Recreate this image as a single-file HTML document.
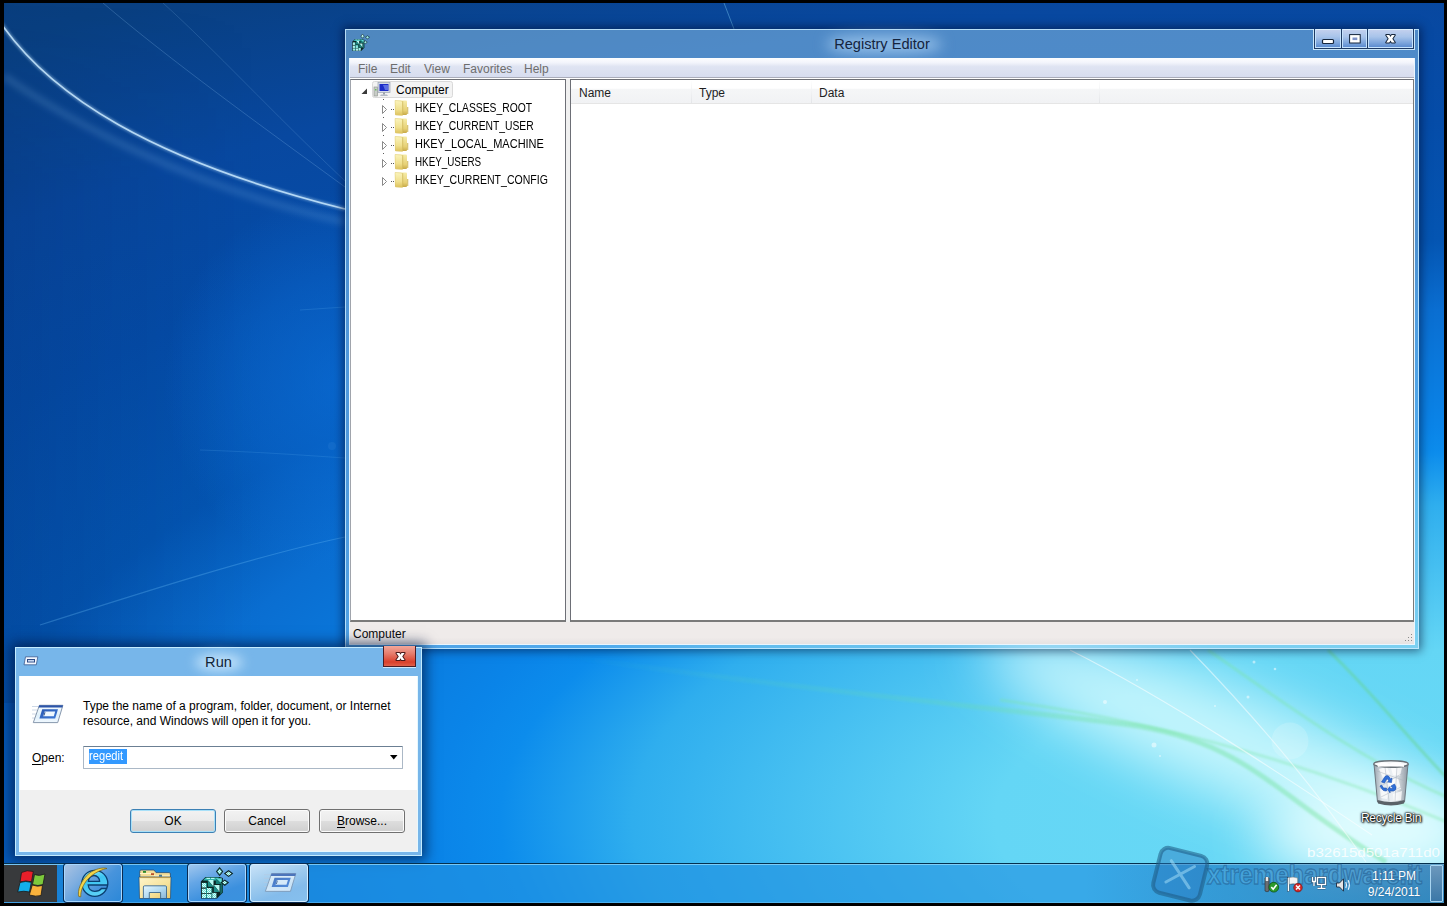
<!DOCTYPE html>
<html><head><meta charset="utf-8">
<style>
*{box-sizing:border-box;margin:0;padding:0}
html,body{width:1447px;height:906px;overflow:hidden;background:#000}
body{position:relative;font-family:"Liberation Sans",sans-serif;font-size:12px;color:#000}
.abs{position:absolute}
#wall{position:absolute;left:4px;top:3px;width:1440px;height:900px;overflow:hidden;
 background:radial-gradient(2500px 1000px at 1416px 817px,#6adaf6 0%,#64d6f5 17%,#2faeee 31.5%,#0c8cec 36.8%,#0a84e8 39.4%,#0a6ed1 51%,#0455b2 58%,#054ca8 70%,#0848a0 82%,#093f80 96.6%,#083a78 110%);}
.cb{position:absolute;top:0;height:19px;background:linear-gradient(#c2d0ee 0,#a8c4ea 40%,#7ea6dc 75%,#5c8cd0 100%);border:1px solid rgba(200,230,255,0.95);border-top-color:#dcf0ff}
.menu{top:5px;line-height:13px;font-size:12px;color:#6d6d6d}
.hk{left:65px;line-height:14px;font-size:12px;color:#000;transform:scaleX(0.86);transform-origin:0 0;white-space:nowrap}
.lh{top:28px;line-height:14px;font-size:12px;color:#1e1e1e}
.btn{width:86px;height:24px;border:1px solid #707070;border-radius:3px;background:linear-gradient(#f2f2f2 0,#ebebeb 48%,#dddddd 52%,#cfcfcf 100%);text-align:center;line-height:21px;padding-top:1px;font-size:12px;color:#000;box-shadow:inset 0 0 0 1px #fbfbfb}
.tbtn{top:1px;height:38px;border:1px solid #a8d8ff;border-radius:3px;box-shadow:0 0 0 1px #0a2a50}
.bord{position:absolute;background:#000}
</style></head>
<body>
<div id="wall">
 <div class="abs" style="left:0;top:0;width:260px;height:700px;background:linear-gradient(90deg,rgba(0,20,60,0.13) 0%,rgba(0,20,60,0.07) 40%,rgba(0,20,60,0) 100%);-webkit-mask-image:linear-gradient(rgba(0,0,0,0) 0,#000 180px)"></div>
 <div class="abs" style="left:160px;top:190px;width:360px;height:380px;background:radial-gradient(closest-side,rgba(12,118,228,0.55) 0%,rgba(12,118,228,0.3) 55%,rgba(12,118,228,0) 100%)"></div>
 <svg class="abs" style="left:0;top:0" width="1440" height="900" viewBox="4 3 1440 900">
  <defs>
   <filter id="bl3" x="-10%" y="-10%" width="120%" height="120%"><feGaussianBlur stdDeviation="3"/></filter>
   <filter id="bl1" x="-10%" y="-10%" width="120%" height="120%"><feGaussianBlur stdDeviation="1.2"/></filter>
   <filter id="bl25" x="-50%" y="-100%" width="200%" height="300%"><feGaussianBlur stdDeviation="28"/></filter>
   <filter id="bl8" x="-50%" y="-50%" width="200%" height="200%"><feGaussianBlur stdDeviation="12"/></filter>
  </defs>
  <!-- top-left curves -->
  <path d="M4 76 C 60 115, 180 185, 345 222" stroke="rgba(170,215,255,0.16)" stroke-width="7" fill="none" filter="url(#bl3)"/>
  <path d="M0 22 C 50 95, 150 160, 345 209" stroke="rgba(200,232,255,0.85)" stroke-width="1.6" fill="none"/>
  <path d="M0 22 C 50 95, 150 160, 345 209" stroke="rgba(200,235,255,0.35)" stroke-width="4" fill="none" filter="url(#bl1)"/>
  <path d="M103 3 C 170 60, 260 125, 345 187" stroke="rgba(160,210,250,0.22)" stroke-width="1" fill="none"/>
  <path d="M163 3 C 215 50, 270 110, 345 181" stroke="rgba(160,210,250,0.16)" stroke-width="1" fill="none"/>
  <path d="M40 625 C 150 590, 260 555, 345 537" stroke="rgba(120,200,255,0.28)" stroke-width="1.2" fill="none"/>
  <path d="M200 450 C 260 452, 300 455, 345 458" stroke="rgba(120,200,255,0.15)" stroke-width="1" fill="none"/>
  <path d="M300 310 L345 307" stroke="rgba(120,200,255,0.16)" stroke-width="1" fill="none"/>
  <circle cx="332" cy="446" r="4" fill="rgba(150,210,255,0.07)"/>
  <path d="M724 3 L734 29" stroke="rgba(120,200,240,0.45)" stroke-width="1" fill="none"/>
  <!-- bottom right glow -->
  <ellipse cx="1235" cy="745" rx="270" ry="52" transform="rotate(22 1235 745)" fill="rgba(225,255,255,0.75)" filter="url(#bl25)"/>
  <ellipse cx="1370" cy="835" rx="110" ry="45" fill="rgba(235,255,255,0.9)" filter="url(#bl25)"/>
  <!-- green streaks -->
  <linearGradient id="gs" gradientUnits="userSpaceOnUse" x1="564" y1="0" x2="1150" y2="0"><stop offset="0" stop-color="rgb(110,225,150)" stop-opacity="0"/><stop offset="0.6" stop-color="rgb(110,225,150)" stop-opacity="0.18"/><stop offset="1" stop-color="rgb(110,225,150)" stop-opacity="0.42"/></linearGradient>
  <path d="M564 656 C 800 690, 1000 708, 1123 724 S 1270 792, 1386 862" stroke="url(#gs)" stroke-width="5" fill="none" filter="url(#bl1)"/>
  <path d="M1000 700 C 1150 720, 1300 760, 1447 822" stroke="rgba(120,230,160,0.35)" stroke-width="3" fill="none" filter="url(#bl1)"/>
  <path d="M1208 650 C 1280 700, 1360 760, 1447 797" stroke="rgba(120,230,150,0.35)" stroke-width="3" fill="none" filter="url(#bl1)"/>
  <path d="M1328 650 C 1370 690, 1410 740, 1447 778" stroke="rgba(100,210,130,0.45)" stroke-width="3" fill="none" filter="url(#bl1)"/>
  <!-- white thin lines -->
  <path d="M1070 650 C 1170 700, 1290 780, 1372 835" stroke="rgba(255,255,255,0.55)" stroke-width="1.2" fill="none"/>
  <path d="M1190 650 C 1250 712, 1310 780, 1366 862" stroke="rgba(255,255,255,0.5)" stroke-width="1.2" fill="none"/>
  <circle cx="1290" cy="741" r="18.5" fill="rgba(255,255,255,0.16)"/>
  <g fill="rgba(255,255,255,0.5)">
   <circle cx="1105" cy="702" r="2"/><circle cx="1154" cy="745" r="2.5"/><circle cx="1254" cy="662" r="1.5"/><circle cx="1275" cy="669" r="1.3"/><circle cx="1248" cy="697" r="1.5"/><circle cx="1137" cy="680" r="1"/><circle cx="1215" cy="706" r="1"/><circle cx="1160" cy="756" r="1"/>
  </g>
 </svg>
 <!-- hash text -->
 <svg class="abs" style="left:1300px;top:840px" width="140" height="18"><text x="3" y="14" font-family="Liberation Sans" font-size="13" fill="rgba(255,255,255,0.85)" textLength="133" lengthAdjust="spacingAndGlyphs">b32615d501a711d0</text></svg>
</div>
<!-- recycle bin -->
<svg class="abs" style="left:1371px;top:759px" width="40" height="49" viewBox="0 0 40 49">
 <defs>
  <linearGradient id="rbg" x1="0" y1="0" x2="1" y2="0"><stop offset="0" stop-color="#9aa4ae"/><stop offset="0.25" stop-color="#dfe6ec"/><stop offset="0.6" stop-color="#eef2f5"/><stop offset="1" stop-color="#8e98a2"/></linearGradient>
 </defs>
 <path d="M3 5 L37 5 L33.5 43 Q 20 47 6.5 43 Z" fill="url(#rbg)" stroke="#6e7880" stroke-width="1"/>
 <g fill="#ffffff" opacity="0.75">
  <path d="M8 10 L16 8 L19 15 L12 19 Z"/><path d="M20 9 L31 8 L29 17 L22 16 Z"/><path d="M15 21 L27 19 L30 30 L20 33 Z"/><path d="M9 30 L18 32 L16 40 L10 39 Z"/><path d="M22 35 L31 32 L30 41 L23 42 Z"/>
 </g>
 <g fill="none" stroke="#a8b2bc" stroke-width="0.6" opacity="0.8"><path d="M6 12 L34 22 M8 28 L32 14 M10 38 L30 28 M14 8 L18 42 M26 6 L24 42"/></g>
 <ellipse cx="20" cy="5" rx="17.2" ry="3.3" fill="#f4f6f8" stroke="#6a7278" stroke-width="1.4"/>
 <path d="M6 5.5 Q 12 2 18 5 Q 25 2 33 5.5 L 33 8 Q 20 6 7 8 Z" fill="#ffffff" opacity="0.9"/>
 <path d="M6.5 41 Q 20 45 33.5 41 L 33 44.5 Q 20 48.5 7 44.5 Z" fill="#5a6268"/>
 <g fill="#2f6fd8" stroke="#1c50b0" stroke-width="0.6">
  <path d="M10.5 23 L14 17.5 Q 16 15.5 18 17.5 L 19.5 20 L 21 19 L 20.5 23.5 L 16.5 23 L 18 22 L 16 19.5 L 13.5 24 Z"/>
  <path d="M20 27 L 23.5 25 L 25 28 Q 25.5 31 22.5 32 L 19 32 L 19 33.8 L 16.5 30.5 L 19 27.5 L 19 29.5 L 22 29.5 Z"/>
  <path d="M9 27 L 11 30 Q 12 32 14.5 32 L 15.5 32 L 15.5 29 L 12.5 29 L 10.5 26 Z"/>
 </g>
</svg>
<div class="abs" style="left:1350px;top:811px;width:82px;text-align:center;font-size:12px;line-height:14px;color:#fff;text-shadow:0 0 1px #000,0 0 2px #000,0 0 3px #000,1px 1px 2px #000;letter-spacing:-0.3px">Recycle Bin</div>

<!-- Registry Editor window -->
<div id="reg" class="abs" style="left:345px;top:29px;width:1074px;height:620px;box-shadow:0 0 9px 2px rgba(0,10,40,0.55);">
 <div class="abs" style="left:0;top:0;width:1074px;height:620px;background:rgba(150,204,238,0.5);border:1px solid rgba(200,235,255,0.85);"></div>
 <!-- title glow -->
 <div class="abs" style="left:482px;top:7px;width:114px;height:17px;border-radius:40%;background:rgba(180,215,248,0.7);filter:blur(7px)"></div>
 <div class="abs" style="left:0;top:7px;width:1074px;text-align:center;font-size:14.6px;color:#14243e;line-height:16px">Registry Editor</div>
 <!-- reg icon -->
 <svg class="abs" style="left:4px;top:3px" width="22" height="22" viewBox="0 0 40 40"><use href="#regcube"/></svg>
 <!-- caption buttons -->
 <div class="abs" style="left:968px;top:0;width:102px;height:21px;border:1px solid rgba(215,240,255,0.9);border-top:none;"></div>
 <div class="abs" style="left:969px;top:0;width:100px;height:20px;background:#1e3a64;"></div>
 <div class="abs cb" style="left:970px;width:26px;"></div>
 <div class="abs cb" style="left:997px;width:25px;"></div>
 <div class="abs cb" style="left:1023px;width:45px;"></div>
 <svg class="abs" style="left:968px;top:0" width="102" height="21" viewBox="0 0 102 21">
  <rect x="9.5" y="10.5" width="11" height="4" rx="1" fill="#fff" stroke="#16263c" stroke-width="1.2"/>
  <rect x="38.3" y="7.3" width="7.2" height="5" fill="none" stroke="#16263c" stroke-width="4.4"/>
  <rect x="38.3" y="7.3" width="7.2" height="5" fill="#7f93c8" stroke="#fff" stroke-width="2.4"/>
  <path d="M73.2 6 L76.3 6 L77.5 8 L78.7 6 L81.8 6 L79.3 9.75 L81.8 13.5 L78.7 13.5 L77.5 11.5 L76.3 13.5 L73.2 13.5 L75.7 9.75 Z" fill="#fff" stroke="#16263c" stroke-width="2" stroke-linejoin="round" paint-order="stroke"/>
 </svg>
 <!-- client -->
 <div class="abs" style="left:4px;top:29px;width:1066px;height:587px;background:#fff;border:1px solid rgba(230,245,255,0.9);border-top:none">
  <!-- menubar -->
  <div class="abs" style="left:0;top:0;width:1064px;height:20px;background:linear-gradient(#fdfeff 0,#f2f4fb 25%,#dfe4f2 45%,#d7ddef 100%);border-bottom:1px solid #a9acb9;"></div>
  <div class="abs menu" style="left:8px;">File</div>
  <div class="abs menu" style="left:40px;">Edit</div>
  <div class="abs menu" style="left:74px;">View</div>
  <div class="abs menu" style="left:113px;">Favorites</div>
  <div class="abs menu" style="left:174px;">Help</div>
  <div class="abs" style="left:0;top:21px;width:1064px;height:543px;background:#f0f0f0"></div>
  <!-- tree panel -->
  <div class="abs" style="left:0;top:21px;width:216px;height:543px;background:#fff;border:1px solid #828790;border-width:1px 1px 2px 1px;border-color:#6d6f76 #6d6f76 #7a7a7a #a0a4ac"></div>
  <!-- list panel -->
  <div class="abs" style="left:220px;top:21px;width:844px;height:543px;background:#fff;border:1px solid #6d6f76;border-width:1px 1px 2px 1px;border-color:#6d6f76 #7a7a7a #7a7a7a #6d6f76"></div>
  <!-- tree contents -->
  <svg class="abs" style="left:0;top:21px" width="217" height="130" viewBox="0 0 217 130">
   <!-- dotted lines -->
   <g fill="#5a5a5a">
    <rect x="22" y="12" width="1" height="1"/><rect x="24" y="12" width="1" height="1"/>
    <rect x="33" y="20" width="1" height="1"/><rect x="33" y="38" width="1" height="1"/><rect x="33" y="56" width="1" height="1"/><rect x="33" y="74" width="1" height="1"/>
    <rect x="41" y="30" width="1" height="1"/><rect x="43" y="30" width="1" height="1"/>
    <rect x="41" y="48" width="1" height="1"/><rect x="43" y="48" width="1" height="1"/>
    <rect x="41" y="66" width="1" height="1"/><rect x="43" y="66" width="1" height="1"/>
    <rect x="41" y="84" width="1" height="1"/><rect x="43" y="84" width="1" height="1"/>
    <rect x="41" y="102" width="1" height="1"/><rect x="43" y="102" width="1" height="1"/>
   </g>
   <!-- expanded triangle -->
   <path d="M11.5 15 L17 9.5 L17 15 Z" fill="#3a3a3a"/>
   <!-- collapsed triangles -->
   <g fill="none" stroke="#8a8a8a" stroke-width="1">
    <path d="M32.5 26.5 L32.5 34.5 L36.5 30.5 Z"/>
    <path d="M32.5 44.5 L32.5 52.5 L36.5 48.5 Z"/>
    <path d="M32.5 62.5 L32.5 70.5 L36.5 66.5 Z"/>
    <path d="M32.5 80.5 L32.5 88.5 L36.5 84.5 Z"/>
    <path d="M32.5 98.5 L32.5 106.5 L36.5 102.5 Z"/>
   </g>
   <!-- selection box -->
   <rect x="22.5" y="2.5" width="80" height="16" rx="2" fill="#f3f3f3" stroke="#d9d9d9"/>
   <!-- computer icon -->
   <rect x="24" y="8" width="3.5" height="9" fill="#c8ccc8" stroke="#8a9088" stroke-width="0.6"/>
   <rect x="25" y="10" width="1.5" height="1.5" fill="#6cc060"/>
   <rect x="28" y="3.5" width="12" height="10" fill="#d6dbe6" stroke="#9aa4b4" stroke-width="0.7"/>
   <rect x="29.5" y="5" width="9" height="7" fill="#1c2cc8"/>
   <path d="M33 6 L38 6 L38 11 L35 11 Z" fill="#6a80e8" opacity="0.8"/>
   <path d="M31 15.5 L37 15.5 L38 17 L30 17 Z" fill="#b4bac4"/>
   <rect x="33" y="13.5" width="2" height="2" fill="#9aa0aa"/>
   <!-- folders -->
   <defs>
    <linearGradient id="fl" x1="0" y1="0" x2="0" y2="1"><stop offset="0" stop-color="#fbf4bc"/><stop offset="0.6" stop-color="#f0e08e"/><stop offset="1" stop-color="#dcc05a"/></linearGradient>
    <linearGradient id="fr" x1="0" y1="0" x2="0" y2="1"><stop offset="0" stop-color="#f6eca8"/><stop offset="0.7" stop-color="#e6d074"/><stop offset="1" stop-color="#c8aa48"/></linearGradient>
    <g id="fold">
     <rect x="45" y="21.5" width="12" height="14.5" rx="1" fill="url(#fr)"/>
     <rect x="57" y="28" width="1.3" height="7" fill="#d8c478"/>
     <path d="M45 21.5 L51.5 22 L52.5 23.5 L52.5 36.5 L45.5 36 Z" fill="url(#fl)" stroke="#e0cc78" stroke-width="0.5"/>
     <rect x="52.3" y="22" width="0.9" height="14" fill="#c8b050" opacity="0.6"/>
    </g>
   </defs>
   <use href="#fold"/><use href="#fold" y="18"/><use href="#fold" y="36"/><use href="#fold" y="54"/><use href="#fold" y="72"/>
  </svg>
  <div class="abs" style="left:46px;top:25px;line-height:14px;font-size:12px;color:#000">Computer</div>
  <div class="abs hk" style="top:43px">HKEY_CLASSES_ROOT</div>
  <div class="abs hk" style="top:61px">HKEY_CURRENT_USER</div>
  <div class="abs hk" style="top:79px;transform:scaleX(0.916)">HKEY_LOCAL_MACHINE</div>
  <div class="abs hk" style="top:97px;transform:scaleX(0.82)">HKEY_USERS</div>
  <div class="abs hk" style="top:115px;transform:scaleX(0.878)">HKEY_CURRENT_CONFIG</div>
  <!-- list header -->
  <div class="abs" style="left:221px;top:22px;width:842px;height:24px;background:linear-gradient(#fff 0,#fff 36%,#f5f6f7 40%,#f1f2f4 100%);border-bottom:1px solid #e5e5e5"></div>
  <div class="abs" style="left:341px;top:22px;width:1px;height:23px;background:linear-gradient(#fff,#e3e5e8)"></div>
  <div class="abs" style="left:461px;top:22px;width:1px;height:23px;background:linear-gradient(#fff,#e3e5e8)"></div>
  <div class="abs" style="left:749px;top:22px;width:1px;height:23px;background:linear-gradient(#fff,#e3e5e8)"></div>
  <div class="abs lh" style="left:229px">Name</div>
  <div class="abs lh" style="left:349px">Type</div>
  <div class="abs lh" style="left:469px">Data</div>
  <!-- status -->
  <div class="abs" style="left:0;top:564px;width:1064px;height:22px;background:linear-gradient(#efebea 0,#efebea 70%,#e6e2e2 100%);"></div>
  <div class="abs" style="left:3px;top:569px;line-height:14px;font-size:12px;color:#0a0a0a">Computer</div>
  <!-- resize grip -->
  <svg class="abs" style="left:1054px;top:576px" width="10" height="10"><g fill="#8a8a8a"><rect x="7" y="0" width="1" height="1"/><rect x="7" y="3" width="1" height="1"/><rect x="4" y="3" width="1" height="1"/><rect x="7" y="6" width="1" height="1"/><rect x="4" y="6" width="1" height="1"/><rect x="1" y="6" width="1" height="1"/></g></svg>
 </div>
</div>

<!-- Run dialog -->
<div id="run" class="abs" style="left:15px;top:647px;width:407px;height:209px;box-shadow:0 0 12px 4px rgba(0,20,60,0.65);">
 <div class="abs" style="left:0;top:0;width:407px;height:209px;background:#77b6ea;border:1px solid #c4ecff;"></div>
 <div class="abs" style="left:180px;top:7px;width:48px;height:17px;border-radius:50%;background:rgba(200,230,252,0.9);filter:blur(6px)"></div>
 <div class="abs" style="left:0;top:7px;width:407px;text-align:center;font-size:14.6px;line-height:16px;color:#102438">Run</div>
 <!-- small run icon -->
 <svg class="abs" style="left:8px;top:9px" width="16" height="10" viewBox="0 0 16 10">
  <path d="M2.5 0.8 L14.8 0.8 L13.3 8.8 L1 8.8 Z" fill="#f4f8ff" stroke="#3a5a90" stroke-width="0.8"/>
  <rect x="4" y="3" width="8" height="3.5" fill="#2c4a86"/>
  <rect x="5" y="4" width="6" height="1.6" fill="#c8d8f0"/>
 </svg>
 <!-- close button -->
 <div class="abs" style="left:368px;top:-1px;width:33px;height:21px;background:linear-gradient(#f2a79a 0,#e57a6a 40%,#d9402c 80%,#e0604a 100%);border:1px solid #4a1c24;border-top:none;box-shadow:0 1px 0 rgba(230,245,255,0.8)"></div>
 <svg class="abs" style="left:377px;top:4px" width="14" height="11" viewBox="0 0 14 11">
  <path d="M4.4 2 L7.5 2 L8.5 3.8 L9.5 2 L12.6 2 L10.2 5.5 L12.6 9 L9.5 9 L8.5 7.2 L7.5 9 L4.4 9 L6.8 5.5 Z" fill="#fff" stroke="#4a1a1a" stroke-width="2" stroke-linejoin="round" paint-order="stroke"/>
 </svg>
 <!-- client -->
 <div class="abs" style="left:4px;top:29px;width:399px;height:176px;background:#f0f0f0;border:1px solid rgba(230,248,255,0.9);border-top:none">
  <div class="abs" style="left:0;top:0;width:397px;height:114px;background:#fff"></div>
 </div>
 <!-- big run icon -->
 <svg class="abs" style="left:17px;top:57px" width="33" height="21" viewBox="0 0 33 21">
  <defs><linearGradient id="rg" x1="0" y1="0" x2="0" y2="1"><stop offset="0" stop-color="#f4fbff"/><stop offset="0.6" stop-color="#e0f0fa"/><stop offset="1" stop-color="#f0f8ff"/></linearGradient>
  <linearGradient id="rg2" x1="0" y1="0" x2="1" y2="1"><stop offset="0" stop-color="#2a58b0"/><stop offset="1" stop-color="#3c7ad8"/></linearGradient></defs>
  <g id="runico">
  <g stroke="#b8c8dc" stroke-width="1" opacity="0.7"><path d="M0 2.5 L6 2.5 M0 6 L5 6 M0 10 L4 10 M0 14 L3 14"/></g>
  <path d="M7.4 1.3 L30.9 1.3 L25.7 18.6 L1.3 18.6 Z" fill="url(#rg)" stroke="#7a8ca4" stroke-width="0.9"/>
  <path d="M7.2 1.2 L31 1.2 L30.3 3.6 L6.5 3.6 Z" fill="#2c54a8"/>
  <path d="M10.2 5.3 L26 5.3 L23.2 14.5 L7.4 14.5 Z" fill="url(#rg2)"/>
  <path d="M12.6 7.6 L23.2 7.6 L21.8 12.2 L11.2 12.2 Z" fill="#eef8ff"/>
  <path d="M13 8.2 L12 11.5" stroke="#2a4a80" stroke-width="0.9"/>
  </g>
 </svg>
 <div class="abs" style="left:68px;top:52px;width:330px;line-height:15px;font-size:12px;color:#000">Type the name of a program, folder, document, or Internet<br>resource, and Windows will open it for you.</div>
 <div class="abs" style="left:17px;top:104px;line-height:15px;font-size:12px;color:#000"><u style="text-underline-offset:2px">O</u>pen:</div>
 <!-- input -->
 <div class="abs" style="left:68px;top:99px;width:320px;height:23px;background:#fff;border:1px solid #abb8c6;border-top-color:#6b7f93;border-radius:1px"></div>
 <div class="abs" style="left:74px;top:102px;width:38px;height:15px;background:#3399ff"></div>
 <div class="abs" style="left:74px;top:102px;line-height:15px;font-size:12px;color:#fff;transform:scaleX(0.93);transform-origin:0 0">regedit</div>
 <svg class="abs" style="left:375px;top:108px" width="8" height="5"><path d="M0 0 L7.5 0 L3.75 4.5 Z" fill="#000"/></svg>
 <!-- buttons -->
 <div class="abs btn" style="left:115px;top:162px;border-color:#3c80b4;box-shadow:inset 0 0 0 1px #a8e0f8">OK</div>
 <div class="abs btn" style="left:209px;top:162px">Cancel</div>
 <div class="abs btn" style="left:304px;top:162px"><u style="text-underline-offset:2px">B</u>rowse...</div>
</div>

<!-- Taskbar -->
<div id="tb" class="abs" style="left:4px;top:863px;width:1440px;height:40px;">
 <div class="abs" style="left:0;top:0;width:1440px;height:40px;background:rgba(34,145,225,0.66);border-top:1px solid #04304e;"></div>
 <div class="abs" style="left:0;top:1px;width:1440px;height:1px;background:rgba(150,220,255,0.75)"></div>
 <div class="abs" style="left:0;top:39px;width:1440px;height:1px;background:rgba(150,220,255,0.35)"></div>
 <div class="abs" style="left:1080px;top:1px;width:360px;height:39px;background:linear-gradient(90deg,rgba(20,50,90,0) 0%,rgba(20,50,90,0.12) 35%,rgba(20,50,90,0.3) 100%)"></div>
 <!-- start -->
 <div class="abs" style="left:0;top:2px;width:53px;height:37px;background:#383a3c"></div>
 <svg class="abs" style="left:6px;top:3px" width="42" height="34" viewBox="0 0 42 34">
  <g stroke="#1a1a1a" stroke-width="0.8">
  <path d="M11.5 6.5 Q 17 3.5 23.3 5.5 L 21.5 15.8 Q 16 14 10 16 Z" fill="#e91f2a"/>
  <path d="M24.5 8.5 Q 29 10.5 35 8 L 33 18.5 Q 28 20.5 22.5 18.5 Z" fill="#7cc93c"/>
  <path d="M10 16.5 Q 15.5 14.5 21.3 16.3 L 19.5 26 Q 14 24.5 7.7 26 Z" fill="#12aeea"/>
  <path d="M22.3 19 Q 27 21 32.5 19.5 L 31 29.5 Q 26 31 19.3 29 Z" fill="#f9b23c"/>
  </g>
 </svg>
 <!-- task buttons -->
 <div class="abs tbtn" style="left:60px;width:58px;background:linear-gradient(135deg,#a9c2e2 0%,#7eaee0 30%,#4894dc 60%,#2c88d8 100%)"></div>
 <div class="abs tbtn" style="left:184px;width:58px;background:linear-gradient(160deg,#9fc6ee 0%,#64a6e6 35%,#3c90de 70%,#3a92de 100%)"></div>
 <div class="abs tbtn" style="left:246px;width:58px;background:linear-gradient(160deg,#c8e2f8 0%,#a4ceef 35%,#84bceb 70%,#86c0ee 100%);border-color:#d4eeff"></div>
 <!-- IE icon -->
 <svg class="abs" style="left:68px;top:2px" width="38" height="36" viewBox="0 0 38 36">
  <defs><linearGradient id="ieg" x1="0" y1="0" x2="0.3" y2="1"><stop offset="0" stop-color="#9af0ff"/><stop offset="0.45" stop-color="#3cc4f2"/><stop offset="1" stop-color="#5ad0f6"/></linearGradient></defs>
  <path fill-rule="evenodd" d="M9.8 18.3 A13 13 0 1 0 35.8 18.3 A13 13 0 1 0 9.8 18.3 Z M16.4 16.3 A5.6 5.8 0 0 1 27.6 16.3 Z M16.2 20 L35.69 20 L34.7 23.5 L29.5 23.5 C28 25.5 25.5 26.3 22.8 26.3 C19 26.3 16.6 23.8 16.2 20 Z" fill="url(#ieg)" stroke="#0a3f70" stroke-width="1.3"/>
  <path d="M6.8 31.5 C 5 26, 9 15, 17 8.5 C 23 3.8, 31 2, 35 3.5 C 31 4, 22 7.5, 16 14 C 11 19.5, 8.5 26, 8.8 31.8 Z" fill="#f2d44a" stroke="#7a6010" stroke-width="0.7"/>
 </svg>
 <!-- explorer icon -->
 <svg class="abs" style="left:133px;top:6px" width="36" height="32" viewBox="0 0 36 32">
  <defs>
   <linearGradient id="exg" x1="0" y1="0" x2="1" y2="1"><stop offset="0" stop-color="#fff6cc"/><stop offset="0.6" stop-color="#f6e29a"/><stop offset="1" stop-color="#e8c868"/></linearGradient>
   <linearGradient id="exs" x1="0" y1="0" x2="1" y2="1"><stop offset="0" stop-color="#e4f6ff"/><stop offset="0.5" stop-color="#b4dcf2"/><stop offset="1" stop-color="#88b4d4"/></linearGradient>
  </defs>
  <path d="M2.8 2.2 Q 2.8 1 4 1 L 17 1 L 19 3.6 L 32.2 3.6 Q 33.4 3.6 33.4 5 L 33.4 9 L 2.8 9 Z" fill="#f4dc96" stroke="#1e4a78" stroke-width="0.8"/>
  <path d="M3 4.5 L16 4.5 L18 7 L33 7" stroke="#fff4c8" stroke-width="1" fill="none"/>
  <rect x="6" y="2" width="3" height="1.8" fill="#2a8a2a"/><rect x="14" y="4.2" width="3" height="1.8" fill="#b8502a"/><rect x="22" y="5.7" width="3" height="1.9" fill="#4a7a90"/>
  <path d="M2 8 L34 8 L33.5 29.5 L2.5 29.5 Z" fill="url(#exg)" stroke="#1e4a78" stroke-width="0.7"/>
  <path d="M2.6 8.6 L33.4 8.6" stroke="#b89848" stroke-width="1"/>
  <path d="M6.4 29.5 L6.4 18 Q 6.4 16.8 7.6 16.8 L 28.3 16.8 Q 29.5 16.8 29.5 18 L 29.5 29.5 L 23.6 29.5 L 23.6 23.5 L 12.3 23.5 L 12.3 29.5 Z" fill="url(#exs)" stroke="#2a5a88" stroke-width="0.8"/>
 </svg>
 <!-- regedit icon -->
 <svg class="abs" style="left:191px;top:1px" width="40" height="38" viewBox="0 0 40 38">
  <defs>
   <pattern id="dith" width="2" height="2" patternUnits="userSpaceOnUse"><rect width="2" height="2" fill="#6adcd4"/><rect width="1" height="1" fill="#dcfffa"/><rect x="1" y="1" width="1" height="1" fill="#dcfffa"/></pattern>
  </defs>
  <g id="regcube">

  <path d="M6 34.6 L22 34.6 L27.9 28.6 L27.9 14 L24.5 13 L10.5 13 L5.8 17.5 Z" fill="#0b2424"/>
  <!-- top face -->
  <path d="M10.8 13.6 L24 13.6 L21 16.5 L8 16.5 Z" fill="#2fb4ac"/>
  <rect x="11.5" y="13.9" width="3.5" height="1" fill="#c8fff8"/><rect x="16" y="13.9" width="3.5" height="1" fill="#c8fff8"/>
  <!-- front blocks -->
  <g fill="url(#dith)">
   <rect x="6.9" y="18.9" width="4.2" height="4.6"/><rect x="6.9" y="24.7" width="4.2" height="4.3"/><rect x="6.9" y="29.8" width="4.2" height="4.2"/>
   <rect x="12" y="24" width="4.6" height="5"/><rect x="12" y="29.8" width="4.6" height="4.2"/>
   <rect x="17.2" y="28.9" width="4.2" height="5.1"/>
  </g>
  <g fill="#1e9a92"><rect x="11.1" y="18.9" width="0.9" height="15"/><rect x="16.6" y="24" width="0.6" height="10"/></g>
  <!-- step pieces -->
  <path d="M12.8 16 L18.5 16 L18.5 22.8 Z" fill="#b8f8f2"/><path d="M12.8 16 L18.5 22.8 L12.8 22.8 Z" fill="#1f8c86"/>
  <path d="M18.8 21 L24.5 21 L24.5 28 Z" fill="#b8f8f2"/><path d="M18.8 21 L24.5 28 L18.8 28 Z" fill="#1f8c86"/>
  <path d="M20.8 14.2 L26.8 14.2 L26.8 20 Z" fill="#60e0d8"/><path d="M20.8 14.2 L26.8 20 L20.8 20 Z" fill="#157a74"/>
  <!-- right face -->
  <path d="M25.2 21 L27.4 19 L27.4 28.2 L25.2 30.5 Z" fill="#156a66"/>
  <!-- floating diamonds -->
  <g stroke="#0b2424" stroke-width="1.1">
   <path d="M24.6 3.8 L27.6 7.5 L24.6 11.4 L21.6 7.5 Z" fill="url(#dith)"/>
   <path d="M33.6 6.8 L37.4 9.6 L33.6 12.4 L29.8 9.6 Z" fill="url(#dith)"/>
   <path d="M29.8 16.1 L33.2 18.6 L29.8 21.2 L26.4 18.6 Z" fill="url(#dith)"/>
  </g>
  </g>
 </svg>
 <!-- run icon taskbar -->
 <svg class="abs" style="left:260px;top:9px" width="34" height="22" viewBox="0 0 33 21"><g opacity="0.72"><use href="#runico"/></g></svg>
 <!-- watermark -->
 <svg class="abs" style="left:1140px;top:-22px" width="290" height="64" viewBox="0 0 290 64">
  <g transform="rotate(14 35 34)">
   <rect x="12" y="10" width="48" height="46" rx="8" fill="rgba(40,120,190,0.45)" stroke="rgba(30,90,130,0.55)" stroke-width="4"/>
   <path d="M24 22 L48 44 M48 22 L24 44" stroke="rgba(170,225,250,0.5)" stroke-width="3" stroke-linecap="round"/>
  </g>
  <text x="63" y="43" font-family="Liberation Sans" font-size="28" font-weight="bold" fill="rgba(110,190,235,0.28)" stroke="rgba(25,75,125,0.45)" stroke-width="1.3" textLength="215" lengthAdjust="spacingAndGlyphs">xtremehardware.it</text>
 </svg>
 <!-- tray icons -->
 <svg class="abs" style="left:1257px;top:11px" width="95" height="20" viewBox="0 0 95 20">
  <path d="M4 4 Q 6 2 8 4 L 8 17 Q 6 18.5 4 17 Z" fill="#6a6e72" stroke="#2a2e32" stroke-width="0.6"/>
  <rect x="4.8" y="3" width="2.4" height="4" fill="#e8e8e8"/>
  <circle cx="12.8" cy="13.2" r="4.9" fill="#2c9a2c" stroke="#0a4a10" stroke-width="0.7"/><path d="M10.3 13 L12.2 15.3 L15.6 10.8" stroke="#fff" stroke-width="1.6" fill="none"/>
  <rect x="26.6" y="3.3" width="1.6" height="14" fill="#fff" stroke="#1a2a3a" stroke-width="0.4"/>
  <path d="M28.2 3.5 Q 32 2.5 36.6 4 L 36.6 10.3 Q 32 9 28.2 10.3 Z" fill="#f4f4f4" stroke="#6a7a80" stroke-width="0.5"/>
  <circle cx="37" cy="13.6" r="4.3" fill="#d42a2a" stroke="#6a1010" stroke-width="0.6"/><path d="M35 11.6 L39 15.6 M39 11.6 L35 15.6" stroke="#fff" stroke-width="1.4"/>
  <g stroke="#1a2a40" stroke-width="2.6" fill="none" opacity="0.55"><path d="M51.5 3 L51.5 7.5 L54.5 7.5 L54.5 3 M53 7.5 L53 12"/><rect x="56.5" y="3.5" width="8" height="7"/><path d="M60.5 10.5 L60.5 14 M56.5 14.3 L64.5 14.3"/></g>
  <g stroke="#fff" stroke-width="1.3" fill="none"><path d="M51.5 3 L51.5 7.5 L54.5 7.5 L54.5 3 M53 7.5 L53 12"/><rect x="56.5" y="3.5" width="8" height="7"/><path d="M60.5 10.5 L60.5 14 M56.5 14.3 L64.5 14.3"/></g>
  <path d="M75.5 9 L78.5 9 L82.5 4.8 L82.5 17.2 L78.5 13 L75.5 13 Z" fill="#e4e4e4" stroke="#1a2a40" stroke-width="0.9"/>
  <path d="M84.8 8 Q 86.3 11 84.8 14 M87.2 6.3 Q 89.5 11 87.2 15.7" stroke="#e8f4ff" stroke-width="1.2" fill="none"/>
 </svg>
 <div class="abs" style="left:1360px;top:6px;width:60px;text-align:center;font-size:12px;line-height:14px;color:#fff;text-shadow:0 0 2px rgba(0,40,80,0.5)">1:11 PM</div>
 <div class="abs" style="left:1360px;top:22px;width:60px;text-align:center;font-size:12px;line-height:14px;color:#fff;text-shadow:0 0 2px rgba(0,40,80,0.5)">9/24/2011</div>
 <!-- show desktop -->
 <div class="abs" style="left:1426px;top:2px;width:13px;height:37px;background:linear-gradient(#6c98bc,#3c78a8);border:1px solid #a8d4f0;border-radius:1px"></div>
</div>

<div class="bord" style="left:0;top:0;width:1447px;height:3px"></div>
<div class="bord" style="left:0;top:903px;width:1447px;height:3px"></div>
<div class="bord" style="left:0;top:0;width:4px;height:906px"></div>
<div class="bord" style="left:1444px;top:0;width:3px;height:906px"></div>
</body></html>
